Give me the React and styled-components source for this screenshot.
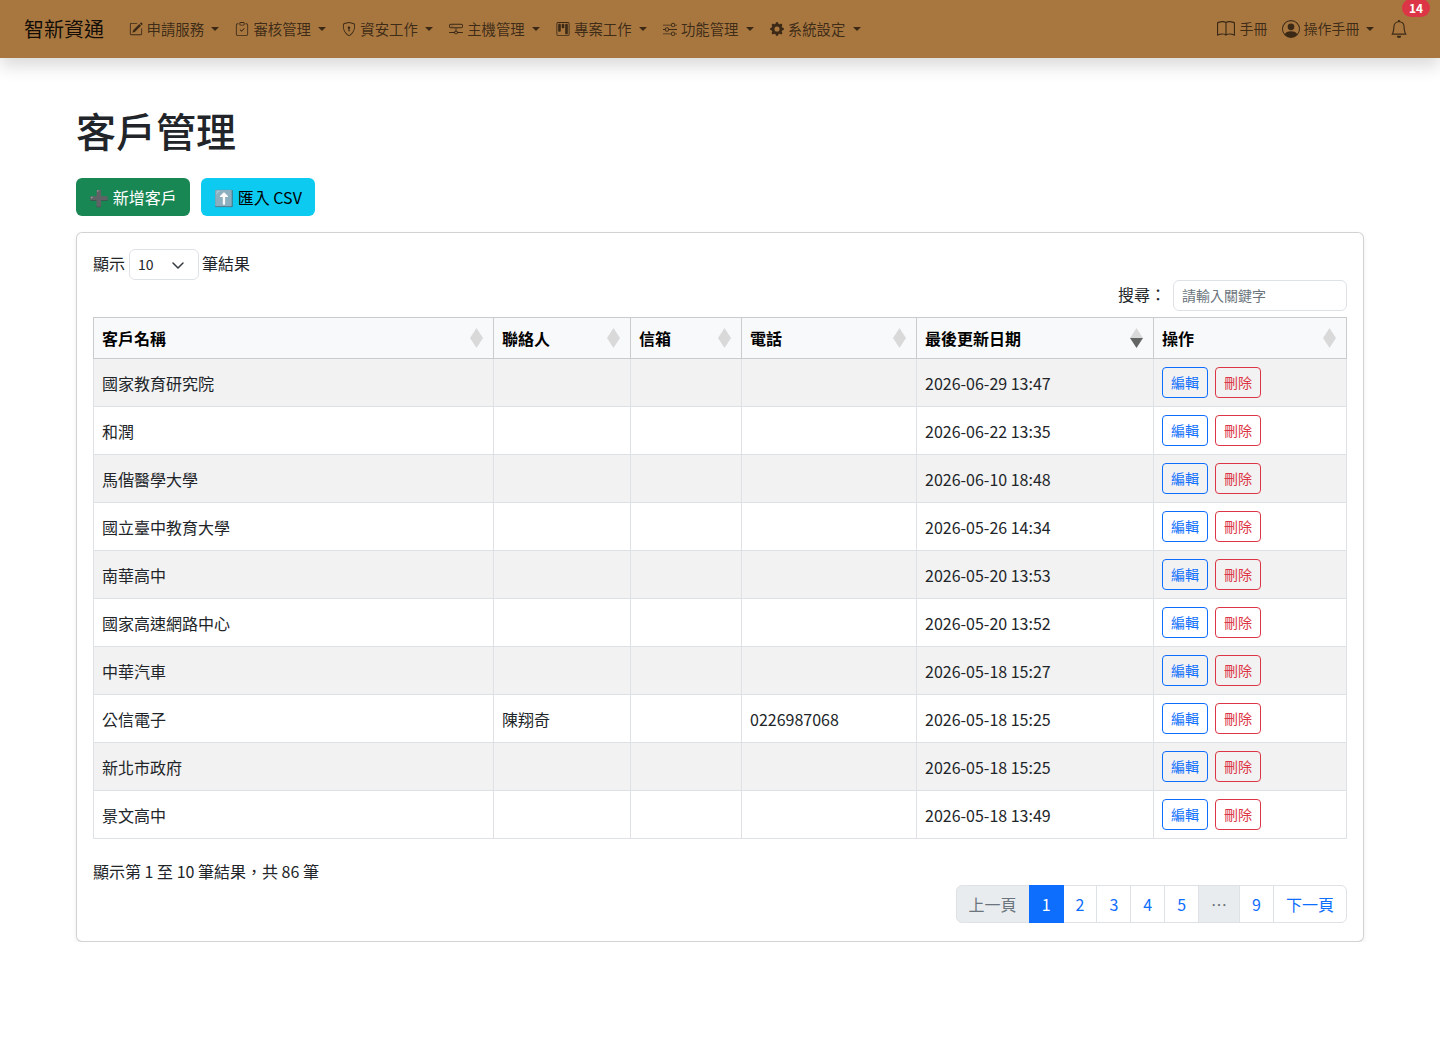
import React from 'react';
import styled, { createGlobalStyle } from 'styled-components';
import { BsPencilSquare, BsClipboardCheck, BsShieldLock, BsHddNetwork, BsKanban, BsSliders, BsGearFill, BsBook, BsPersonCircle, BsBell } from 'react-icons/bs';

const Global = createGlobalStyle`
  *, *::before, *::after { box-sizing: border-box; }
  html, body { margin: 0; padding: 0; background: #fff; }
  body { font-family: "Noto Sans CJK TC", "Noto Sans", sans-serif; font-size: 16px; line-height: 1.5; color: #212529; }
`;

const Navbar = styled.nav`
  height: 58px; background: #a87740; display: flex; align-items: center;
  padding: 0 24px; box-shadow: 0 8px 16px rgba(0,0,0,.15); position: relative;
`;
const Brand = styled.a`font-size: 20px; color: rgba(0,0,0,.9); margin-right: 16.5px; line-height: 30px;`;
const NavList = styled.div`display: flex; align-items: center; flex: 1;`;
const NavItem = styled.a`
  display: flex; align-items: center; gap: 4px; padding: 8px; font-size: 14.4px; line-height: 21.6px;
  color: rgba(0,0,0,.65); white-space: nowrap;
  svg { flex: none; }
`;
const Caret = styled.span`
  width: 0; height: 0; margin-left: 3.3px; border-top: 4.3px solid; border-left: 4.3px solid transparent; border-right: 4.3px solid transparent;
`;
const ManualLink = styled(NavItem)`font-size: 14px; gap: 5px; margin-right: -2px;`;
const UserMenu = styled(NavItem)`
  font-size: 14px;
  ${Caret} { margin-left: 2.4px; }
`;
const BellWrap = styled.a`position: relative; display: flex; padding: 8px; color: rgba(0,0,0,.65);`;
const Badge = styled.span`
  position: absolute; top: -13px; left: 20px; background: #dc3545; color: #fff; font-size: 12px; font-weight: 700; line-height: 1;
  padding: 3px 7px; border-radius: 10px;
`;

const Main = styled.main`padding: 48px 76px 0;`;
const Title = styled.h1`margin: 0 0 24px; font-size: 40px; font-weight: 500; line-height: 48px;`;
const Actions = styled.div`display: flex; gap: 11px; margin-bottom: 16px;`;
const Btn = styled.button`
  height: 38px; padding: 0 12px; min-width: 114px; border: 1px solid transparent; border-radius: 6px; font: inherit; white-space: nowrap;
  background: ${p => p.$bg}; color: ${p => p.$fg};
`;
const Card = styled.section`
  border: 1px solid rgba(0,0,0,.175); border-radius: 6px; padding: 16px; box-shadow: 0 2px 4px rgba(0,0,0,.075); background: #fff;
`;
const LengthRow = styled.div`display: flex; align-items: center; gap: 4px; height: 31px; color: #212529;`;
const Label = styled.span`margin-bottom: 4px;`;
const TrailLabel = styled(Label)`margin-left: -1px;`;
const SelectBox = styled.div`
  width: 70px; height: 31px; border: 1px solid #dee2e6; border-radius: 6px; font-size: 14px; display: flex; align-items: center;
  justify-content: space-between; padding: 0 12px 0 8px;
`;
const SearchRow = styled.div`display: flex; justify-content: flex-end; align-items: center; gap: 7px; height: 31px; margin-bottom: 6px;`;
const SearchInput = styled.div`
  width: 174px; height: 31px; border: 1px solid #dee2e6; border-radius: 6px; font-size: 14px; color: #6c757d; padding: 0 8px; line-height: 29px;
`;
const Table = styled.table`
  width: 1253px; border-collapse: collapse; table-layout: fixed; font-size: 16px;
  th, td { border: 1px solid #dee2e6; padding: 8px; vertical-align: middle; }
  thead th { border-color: #c9cbce; background: #f8f9fa; text-align: left; font-weight: 700; height: 41px; color: #000; position: relative; padding-top: 6px; padding-bottom: 6px; }
  tbody tr { height: 48px; }
  tbody tr:nth-child(odd) td { background: #f2f2f2; }
  tbody td { color: #212529; }
`;
const Sort = styled.svg`position: absolute; right: 10px; top: 50%; transform: translateY(-50%);`;
const RowBtn = styled.button`
  width: 46px; height: 31px; padding: 0; margin-right: 7px; background: transparent; border: 1px solid ${p => p.$c}; border-radius: 4px;
  color: ${p => p.$c}; font: inherit; font-size: 14px; line-height: 1;
`;
const BtnCell = styled.td`&& { padding: 0 8px 1px; }`;
const Info = styled.div`margin-top: 20px; height: 24px; line-height: 24px;`;
const PagerRow = styled.div`display: flex; justify-content: flex-end; margin-top: 2px; margin-bottom: 2px;`;
const Pager = styled.div`display: flex; height: 38px;`;
const Page = styled.a`
  display: flex; align-items: center; justify-content: center; height: 38px; padding: 0 12px; margin-left: -1px;
  border: 1px solid ${p => p.$active ? '#0d6efd' : '#dee2e6'};
  background: ${p => p.$active ? '#0d6efd' : p.$off ? '#e9ecef' : '#fff'};
  color: ${p => p.$active ? '#fff' : p.$off ? '#6c757d' : '#0d6efd'};
  ${p => p.$active && 'position: relative; z-index: 1;'}
  &:first-child { border-radius: 6px 0 0 6px; margin-left: 0; }
  &:last-child { border-radius: 0 6px 6px 0; }
`;

const navItems = [
  [BsPencilSquare, '申請服務'], [BsClipboardCheck, '審核管理'], [BsShieldLock, '資安工作'], [BsHddNetwork, '主機管理'],
  [BsKanban, '專案工作'], [BsSliders, '功能管理'], [BsGearFill, '系統設定'],
];
const rows = [
  ['國家教育研究院', '', '', '2026-06-29 13:47'], ['和潤', '', '', '2026-06-22 13:35'], ['馬偕醫學大學', '', '', '2026-06-10 18:48'],
  ['國立臺中教育大學', '', '', '2026-05-26 14:34'], ['南華高中', '', '', '2026-05-20 13:53'], ['國家高速網路中心', '', '', '2026-05-20 13:52'],
  ['中華汽車', '', '', '2026-05-18 15:27'], ['公信電子', '陳翔奇', '0226987068', '2026-05-18 15:25'], ['新北市政府', '', '', '2026-05-18 15:25'],
  ['景文高中', '', '', '2026-05-18 13:49'],
];
const heads = [['客戶名稱', 400], ['聯絡人', 137], ['信箱', 111], ['電話', 175], ['最後更新日期', 237, true], ['操作', 193]];

const SortIcon = ({ active }) => (
  <Sort width="13" height="20" viewBox="0 0 13 20">
    <path d="M6.5 0 L13 10 H0 Z" fill="#000" opacity=".125" />
    <path d="M6.5 20 L13 10 H0 Z" fill="#000" opacity={active ? '.6' : '.125'} />
  </Sort>
);

export default function App() {
  return (
    <>
      <Global />
      <Navbar>
        <Brand>智新資通</Brand>
        <NavList>
          {navItems.map(([I, t]) => <NavItem key={t}><I size={14} />{t}<Caret /></NavItem>)}
        </NavList>
        <ManualLink><BsBook size={18} />手冊</ManualLink>
        <UserMenu><BsPersonCircle size={18} />操作手冊<Caret /></UserMenu>
        <BellWrap><BsBell size={18} /><Badge>14</Badge></BellWrap>
      </Navbar>
      <Main>
        <Title>客戶管理</Title>
        <Actions>
          <Btn $bg="#198754" $fg="#fff">➕ 新增客戶</Btn>
          <Btn $bg="#0dcaf0" $fg="#000">⬆️ 匯入 CSV</Btn>
        </Actions>
        <Card>
          <LengthRow><Label>顯示</Label><SelectBox>10
            <svg width="16" height="16" viewBox="0 0 16 16"><path d="m3 6 5 5 5-5" fill="none" stroke="#343a40" strokeWidth="1.5" strokeLinecap="round" strokeLinejoin="round" /></svg>
          </SelectBox><TrailLabel>筆結果</TrailLabel></LengthRow>
          <SearchRow><Label>搜尋：</Label><SearchInput>請輸入關鍵字</SearchInput></SearchRow>
          <Table>
            <colgroup>{heads.map(([h, w]) => <col key={h} style={{ width: w }} />)}</colgroup>
            <thead><tr>{heads.map(([h, , a]) => <th key={h}>{h}<SortIcon active={a} /></th>)}</tr></thead>
            <tbody>
              {rows.map(r => (
                <tr key={r[0]}>
                  <td>{r[0]}</td><td>{r[1]}</td><td></td><td>{r[2]}</td><td>{r[3]}</td>
                  <BtnCell><RowBtn $c="#0d6efd">編輯</RowBtn><RowBtn $c="#dc3545">刪除</RowBtn></BtnCell>
                </tr>
              ))}
            </tbody>
          </Table>
          <Info>顯示第 1 至 10 筆結果，共 86 筆</Info>
          <PagerRow>
            <Pager>
              <Page $off>上一頁</Page><Page $active>1</Page><Page>2</Page><Page>3</Page><Page>4</Page><Page>5</Page>
              <Page $off>…</Page><Page>9</Page><Page>下一頁</Page>
            </Pager>
          </PagerRow>
        </Card>
      </Main>
    </>
  );
}
